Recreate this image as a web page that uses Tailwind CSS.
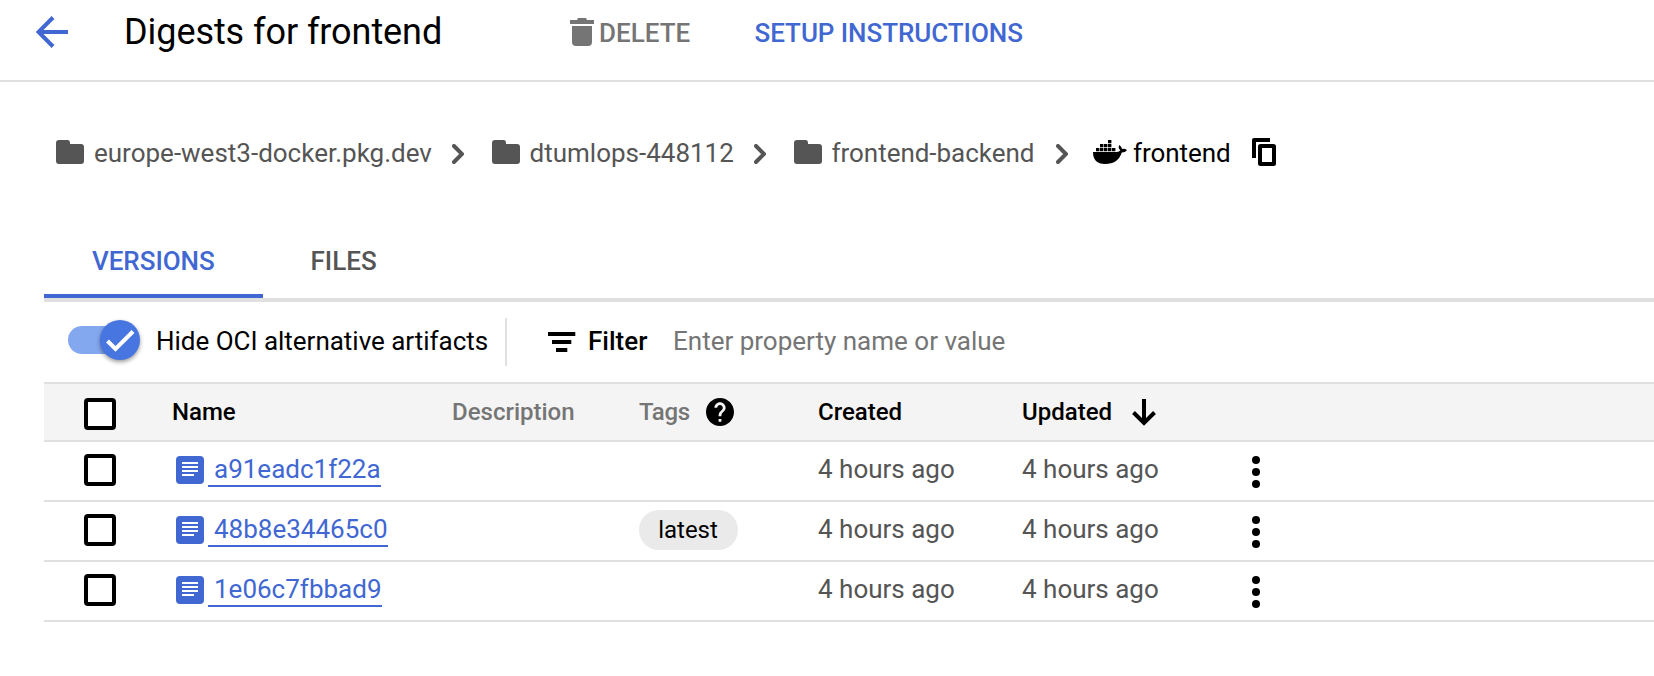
<!DOCTYPE html>
<html lang="en">
<head>
<meta charset="utf-8">
<title>Digests for frontend</title>
<script src="https://cdn.jsdelivr.net/npm/@tailwindcss/browser@4"></script>
</head>
<body class="h-[676px] overflow-hidden bg-white font-[Roboto,sans-serif] text-[26px] leading-[30px] whitespace-nowrap text-black">
<svg class="hidden">
  <symbol id="folder" viewBox="0 0 28 24"><path d="M3 0H11.500Q14 0 14 3V4H25Q28 4 28 7V21Q28 24 25 24H3Q0 24 0 21V3Q0 0 3 0Z" fill="#555"/></symbol>
  <symbol id="chevron" viewBox="0 0 12 20"><path d="M2 2l8 8-8 8" fill="none" stroke="#555" stroke-width="4" stroke-linecap="round"/></symbol>
  <symbol id="doc" viewBox="0 0 28 28"><rect width="28" height="28" rx="4" fill="#4067d2"/><path d="M6 7h16M6 11h16M6 15h16M6 19h12" stroke="#fff" stroke-width="2"/></symbol>
  <symbol id="dots" viewBox="0 0 8 32"><circle cx="4" cy="4" r="4"/><circle cx="4" cy="16" r="4"/><circle cx="4" cy="28" r="4"/></symbol>
</svg>

<header class="flex h-[82px] items-start border-b-2 border-[#e0e0e0]">
  <svg class="mt-4 ml-9 h-8 w-8" viewBox="0 0 32 32"><path d="M32 16H3M17 1.500L2.500 16L17 30.500" fill="none" stroke="#4067d2" stroke-width="4"/></svg>
  <h1 class="mt-[11px] ml-[56px] w-[446px] text-[36px] leading-[42px] tracking-[-0.07px]">Digests for frontend</h1>
  <svg class="mt-[18px] h-7 w-6" viewBox="0 0 24 28"><path d="M0 2H7L8 0H16L17 2H24V6H0ZM2 8H22V24Q22 28 18 28H6Q2 28 2 24Z" fill="#757575"/></svg>
  <span class="mt-[18px] ml-[5px] w-[155.500px] font-medium text-[#757575]">DELETE</span>
  <span class="mt-[18px] font-medium tracking-[-0.05px] text-[#4067d2]">SETUP INSTRUCTIONS</span>
</header>

<nav class="flex h-[152px] items-start pt-[56px] pl-[56px] text-[#555]">
  <svg class="mt-[2px] h-6 w-7"><use href="#folder"/></svg>
  <span class="ml-[10px] w-[358px]">europe-west3-docker.pkg.dev</span>
  <svg class="mt-[6px] h-5 w-3"><use href="#chevron"/></svg>
  <svg class="mt-[2px] ml-7 h-6 w-7"><use href="#folder"/></svg>
  <span class="ml-[9.5px] w-[224.5px]">dtumlops-448112</span>
  <svg class="mt-[6px] h-5 w-3"><use href="#chevron"/></svg>
  <svg class="mt-[2px] ml-7 h-6 w-7"><use href="#folder"/></svg>
  <span class="ml-[9.5px] w-[224.5px] tracking-[-0.03px]">frontend-backend</span>
  <svg class="mt-[6px] h-5 w-3"><use href="#chevron"/></svg>
  <svg class="mt-[2px] ml-[25px] h-6 w-[34px]" viewBox="0 0 34 24"><path d="M0 12H23.500Q26.500 12 27.300 10.300Q24.700 8 26.200 5Q28.700 6.500 29 9Q31.500 8.300 34 10Q32.500 12.500 28.800 12.500Q25 24 12 24Q0 24 0 12ZM3 8h3.400v3.200H3ZM7 8h3.400v3.200H7ZM11 8h3.400v3.200H11ZM15 8h3.400v3.200H15ZM19 8h3.400v3.200H19ZM7 4h3.400v3.300H7ZM11 4h3.400v3.300H11ZM15 4h3.400v3.300H15ZM15 0h3.400v3.300H15Z" fill="#000"/></svg>
  <span class="ml-[6px] w-[119px] tracking-[-0.05px] text-black">frontend</span>
  <svg class="h-7 w-6" viewBox="0 0 24 28"><path d="M2 20V2H18" fill="none" stroke="#000" stroke-width="4" stroke-linejoin="round"/><rect x="8" y="8" width="14" height="18" rx=".5" fill="none" stroke="#000" stroke-width="4" stroke-linejoin="round"/></svg>
</nav>

<main class="ml-[44px]">
  <div class="flex h-[68px] border-b-4 border-[#e0e0e0] font-medium">
    <div class="w-[219px] border-b-4 border-[#4067d2] pt-[12px] pl-[48px] tracking-[-0.05px] text-[#4067d2]">VERSIONS</div>
    <div class="pt-[12px] pl-[47.5px] text-[#555]">FILES</div>
  </div>

  <div class="flex h-[80px] items-start">
    <div class="mt-[18px] ml-6 flex h-10 w-[72px] items-center">
      <div class="h-7 w-[60px] shrink-0 rounded-full bg-[#84a8f0]"></div>
      <div class="z-10 -ml-7 h-10 w-10 shrink-0 rounded-full bg-[#4876e0] shadow-[0_2px_4px_rgba(0,0,0,0.4)]">
        <svg class="h-10 w-10" viewBox="0 0 40 40"><path d="M7.500 21L15.500 29L33 11.500" fill="none" stroke="#fff" stroke-width="4"/></svg>
      </div>
    </div>
    <span class="mt-[24px] ml-4 w-[349px] shrink-0 tracking-[-0.02px]">Hide OCI alternative artifacts</span>
    <div class="mt-4 h-12 w-[2px] shrink-0 bg-[#e0e0e0]"></div>
    <svg class="mt-[30px] ml-[41px] h-5 w-7 shrink-0" viewBox="0 0 28 20"><path d="M0 0H27.300V4H0ZM4 8H23.300V12H4ZM8 16H19.300V20H8Z"/></svg>
    <span class="mt-[24px] ml-[12px] w-[83px] font-medium">Filter</span>
    <span class="mt-[24px] ml-[2px] text-[#757575]">Enter property name or value</span>
  </div>

  <div class="grid h-[60px] grid-cols-[128px_279px_188px_179px_204px_230px_1fr] items-start border-y-2 border-[#e0e0e0] bg-[#f4f4f4] text-[24px] leading-[28px] font-medium">
    <div class="mt-[14px] ml-10 h-8 w-8 rounded-[4px] border-4 border-black bg-white"></div>
    <span class="mt-[14px]">Name</span>
    <span class="mt-[14px] ml-px text-[#757575]">Description</span>
    <div class="mt-[14px] flex"><span class="w-[67px] tracking-[-0.3px] text-[#757575]">Tags</span>
      <svg class="h-7 w-7" viewBox="2 2 20 20"><path d="M12 2C6.480 2 2 6.480 2 12s4.480 10 10 10 10-4.480 10-10S17.520 2 12 2zm1 17h-2v-2h2v2zm2.070-7.750l-.9.920C13.450 12.900 13 13.500 13 15h-2v-.5c0-1.100.45-2.100 1.170-2.830l1.240-1.260c.37-.36.59-.86.59-1.410 0-1.100-.9-2-2-2s-2 .9-2 2H8c0-2.210 1.790-4 4-4s4 1.790 4 4c0 .88-.36 1.680-.93 2.250z"/></svg>
    </div>
    <span class="mt-[14px]">Created</span>
    <div class="mt-[14px] flex"><span class="w-[110px]">Updated</span>
      <svg class="mt-px h-7 w-6" viewBox="0 0 24 28"><path d="M12 0V24M1.500 13.500L12 24L22.500 13.500" fill="none" stroke="#000" stroke-width="4"/></svg>
    </div>
  </div>

  <div class="grid h-[60px] grid-cols-[128px_279px_188px_179px_204px_230px_1fr] items-start border-b-2 border-[#e0e0e0] pt-3 text-[#555]">
    <div class="ml-10 h-8 w-8 rounded-[4px] border-4 border-black"></div>
    <div class="flex pl-1"><svg class="mt-[2px] h-7 w-7"><use href="#doc"/></svg><a class="ml-1 h-[33px] border-b-2 border-[#4067d2] pl-[6px] text-[#4067d2]">a91eadc1f22a</a></div>
    <span></span><span></span>
    <span>4 hours ago</span><span>4 hours ago</span>
    <svg class="mt-[2px] h-8 w-2"><use href="#dots"/></svg>
  </div>
  <div class="grid h-[60px] grid-cols-[128px_279px_188px_179px_204px_230px_1fr] items-start border-b-2 border-[#e0e0e0] pt-3 text-[#555]">
    <div class="ml-10 h-8 w-8 rounded-[4px] border-4 border-black"></div>
    <div class="flex pl-1"><svg class="mt-[2px] h-7 w-7"><use href="#doc"/></svg><a class="ml-1 h-[33px] border-b-2 border-[#4067d2] pl-[6px] text-[#4067d2]">48b8e34465c0</a></div>
    <span></span>
    <span class="-mt-1 h-10 w-[99px] rounded-full bg-[#eaeaea] pt-[6px] pr-px text-center text-[24px] leading-[28px] text-black">latest</span>
    <span>4 hours ago</span><span>4 hours ago</span>
    <svg class="mt-[2px] h-8 w-2"><use href="#dots"/></svg>
  </div>
  <div class="grid h-[60px] grid-cols-[128px_279px_188px_179px_204px_230px_1fr] items-start border-b-2 border-[#e0e0e0] pt-3 text-[#555]">
    <div class="ml-10 h-8 w-8 rounded-[4px] border-4 border-black"></div>
    <div class="flex pl-1"><svg class="mt-[2px] h-7 w-7"><use href="#doc"/></svg><a class="ml-1 h-[33px] border-b-2 border-[#4067d2] pl-[6px] text-[#4067d2]">1e06c7fbbad9</a></div>
    <span></span><span></span>
    <span>4 hours ago</span><span>4 hours ago</span>
    <svg class="mt-[2px] h-8 w-2"><use href="#dots"/></svg>
  </div>
</main>
</body>
</html>
